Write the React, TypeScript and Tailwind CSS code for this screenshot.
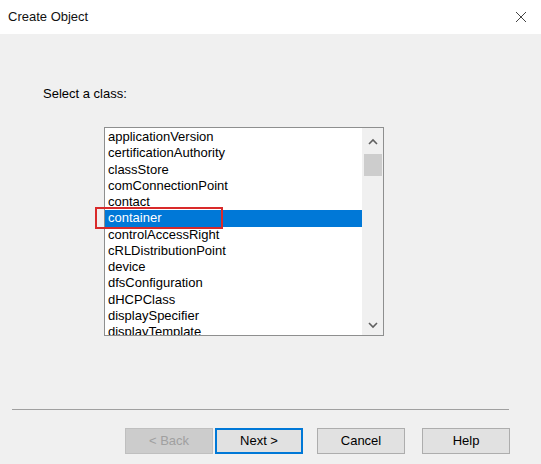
import React from "react";

const classes = [
  "applicationVersion",
  "certificationAuthority",
  "classStore",
  "comConnectionPoint",
  "contact",
  "container",
  "controlAccessRight",
  "cRLDistributionPoint",
  "device",
  "dfsConfiguration",
  "dHCPClass",
  "displaySpecifier",
  "displayTemplate",
];

const SELECTED = "container";

function Chevron({ up }: { up?: boolean }) {
  return (
    <svg width="10" height="7" viewBox="0 0 10 7" className="block">
      <path
        d={up ? "M1 6 L5 2 L9 6" : "M1 1 L5 5 L9 1"}
        fill="none"
        stroke="#606060"
        strokeWidth="1.6"
      />
    </svg>
  );
}

export default function App() {
  return (
    <div
      className="w-[541px] h-[464px] flex flex-col bg-[#f0f0f0] text-[13px] text-black overflow-hidden"
      style={{ fontFamily: '"Liberation Sans", Arial, sans-serif' }}
    >
      {/* title bar */}
      <div className="h-[34px] bg-white flex items-center justify-between pl-2 pr-[14px] shrink-0">
        <span className="text-[13px] text-[#111]">Create Object</span>
        <svg width="12" height="12" viewBox="0 0 12 12">
          <path d="M1 1 L11 11 M11 1 L1 11" stroke="#444" strokeWidth="1" />
        </svg>
      </div>

      {/* body */}
      <div className="flex-1 flex flex-col">
        <div className="pt-[52px] pl-[43px] leading-4">Select a class:</div>

        <div className="pl-[104px] pt-[25px]">
          <div className="relative w-[280px] h-[209px] border border-[#8e8f8f] bg-white flex">
            <div className="flex-1 pt-[1px] overflow-hidden">
              {classes.map((c) => (
                <div
                  key={c}
                  className={
                    "h-[16.25px] leading-[16px] pl-[3px] whitespace-nowrap " +
                    (c === SELECTED ? "bg-[#0078d7] text-white" : "")
                  }
                >
                  {c}
                </div>
              ))}
            </div>
            <div className="w-[21px] bg-[#f0f0f0] flex flex-col items-center">
              <div className="h-[26px] flex items-center justify-center pt-[1px]">
                <Chevron up />
              </div>
              <div className="w-[18px] h-[22px] bg-[#cdcdcd]" />
              <div className="flex-1" />
              <div className="h-[18px] flex items-center justify-center pb-[2px]">
                <Chevron />
              </div>
            </div>
            {/* red callout round the selected item */}
            <div className="absolute left-[-10px] top-[79px] w-[128px] h-[22px] border-2 border-[#d92a2a]" />
          </div>
        </div>

        <div className="flex-1" />

        <div className="ml-3 mr-8 border-t border-[#a0a0a0]" />

        <div className="flex justify-end pr-[31px] pt-[18px] pb-[10px]">
          <button
            disabled
            className="w-[88px] h-[26px] bg-[#cccccc] border border-[#bfbfbf] text-[#a0a0a0]"
          >
            &lt; Back
          </button>
          <button className="ml-[2px] w-[88px] h-[26px] bg-[#e1e1e1] border-2 border-[#0078d7]">
            Next &gt;
          </button>
          <button className="ml-[14px] w-[88px] h-[26px] bg-[#e1e1e1] border border-[#adadad]">
            Cancel
          </button>
          <button className="ml-[17px] w-[88px] h-[26px] bg-[#e1e1e1] border border-[#adadad]">
            Help
          </button>
        </div>
      </div>
    </div>
  );
}
